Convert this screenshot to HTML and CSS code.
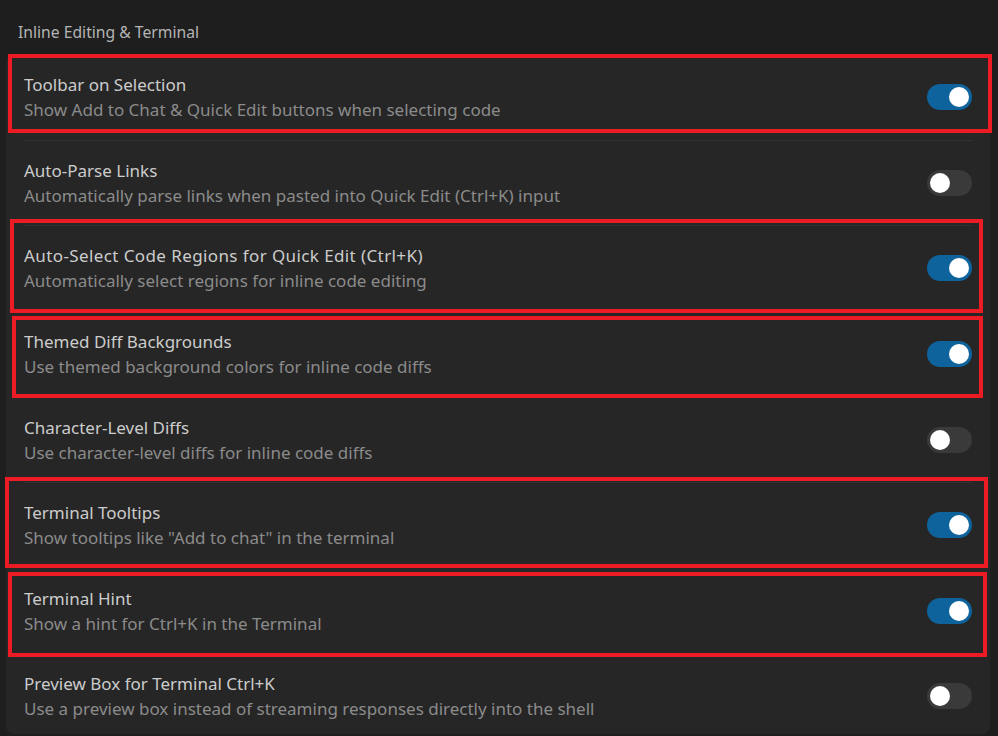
FILE: index.html
```html
<!DOCTYPE html>
<html>
<head>
<meta charset="utf-8">
<link rel="stylesheet" href="styles.css">
</head>
<body>
<div class="page">
  <div class="section-title">Inline Editing &amp; Terminal</div>
  <div class="panel">
    <div class="row">
      <div class="text"><div class="title">Toolbar on Selection</div><div class="desc">Show Add to Chat &amp; Quick Edit buttons when selecting code</div></div>
      <div class="toggle on"><span class="knob"></span></div>
    </div>
    <div class="row">
      <div class="text"><div class="title">Auto-Parse Links</div><div class="desc">Automatically parse links when pasted into Quick Edit (Ctrl+K) input</div></div>
      <div class="toggle"><span class="knob"></span></div>
    </div>
    <div class="row">
      <div class="text"><div class="title wide">Auto-Select Code Regions for Quick Edit (Ctrl+K)</div><div class="desc">Automatically select regions for inline code editing</div></div>
      <div class="toggle on"><span class="knob"></span></div>
    </div>
    <div class="row">
      <div class="text"><div class="title">Themed Diff Backgrounds</div><div class="desc">Use themed background colors for inline code diffs</div></div>
      <div class="toggle on"><span class="knob"></span></div>
    </div>
    <div class="row">
      <div class="text"><div class="title">Character-Level Diffs</div><div class="desc">Use character-level diffs for inline code diffs</div></div>
      <div class="toggle"><span class="knob"></span></div>
    </div>
    <div class="row">
      <div class="text"><div class="title">Terminal Tooltips</div><div class="desc">Show tooltips like "Add to chat" in the terminal</div></div>
      <div class="toggle on"><span class="knob"></span></div>
    </div>
    <div class="row">
      <div class="text"><div class="title">Terminal Hint</div><div class="desc">Show a hint for Ctrl+K in the Terminal</div></div>
      <div class="toggle on"><span class="knob"></span></div>
    </div>
    <div class="row">
      <div class="text"><div class="title">Preview Box for Terminal Ctrl+K</div><div class="desc">Use a preview box instead of streaming responses directly into the shell</div></div>
      <div class="toggle"><span class="knob"></span></div>
    </div>
  </div>
  <div class="mark mark-1"></div>
  <div class="mark mark-2"></div>
  <div class="mark mark-3"></div>
  <div class="mark mark-4"></div>
  <div class="mark mark-5"></div>
</div>
</body>
</html>
```
FILE: styles.css
```css
html, body {
  margin: 0;
  padding: 0;
  background: #1e1e1e;
  height: 100%;
  overflow: hidden;
}
.page {
  position: relative;
  height: 736px;
  font-family: "Noto Sans", "Open Sans", sans-serif;
}
.section-title {
  height: 54px;
  box-sizing: border-box;
  padding: 21px 0 0 18px;
  font-size: 15.7px;
  line-height: 22px;
  color: #b4b4b4;
}
.panel {
  margin: 0 8px 0 6px;
  background: #262626;
  border-radius: 8px;
  padding: 0 18px;
  height: 680px;
  box-sizing: border-box;
}
.row {
  display: flex;
  align-items: center;
  justify-content: space-between;
  height: 85.57px;
  box-sizing: border-box;
}
.row + .row {
  border-top: 1px solid #333333;
}
.text {
  display: flex;
  flex-direction: column;
}
.title {
  font-size: 17px;
  line-height: 25px;
  color: #cccccc;
}
.title.wide {
  letter-spacing: 0.4px;
}
.desc {
  font-size: 17px;
  line-height: 25px;
  color: #8b8b8b;
}
.toggle {
  width: 45px;
  height: 26px;
  border-radius: 13px;
  background: #3a3a3a;
  position: relative;
  flex-shrink: 0;
}
.toggle.on {
  background: #0e639c;
}
.knob {
  position: absolute;
  top: 3px;
  left: 3px;
  width: 20px;
  height: 20px;
  border-radius: 50%;
  background: #ffffff;
}
.toggle.on .knob {
  left: 22px;
}
.mark {
  position: absolute;
  border: 4px solid #ed1c24;
  box-sizing: border-box;
}
.mark-1 { left: 8px; top: 54px; width: 984px; height: 79px; }
.mark-2 { left: 10px; top: 219px; width: 973px; height: 94px; }
.mark-3 { left: 12px; top: 316px; width: 971px; height: 82px; }
.mark-4 { left: 5px; top: 477px; width: 983px; height: 91px; }
.mark-5 { left: 8px; top: 572px; width: 979px; height: 85px; }
```
